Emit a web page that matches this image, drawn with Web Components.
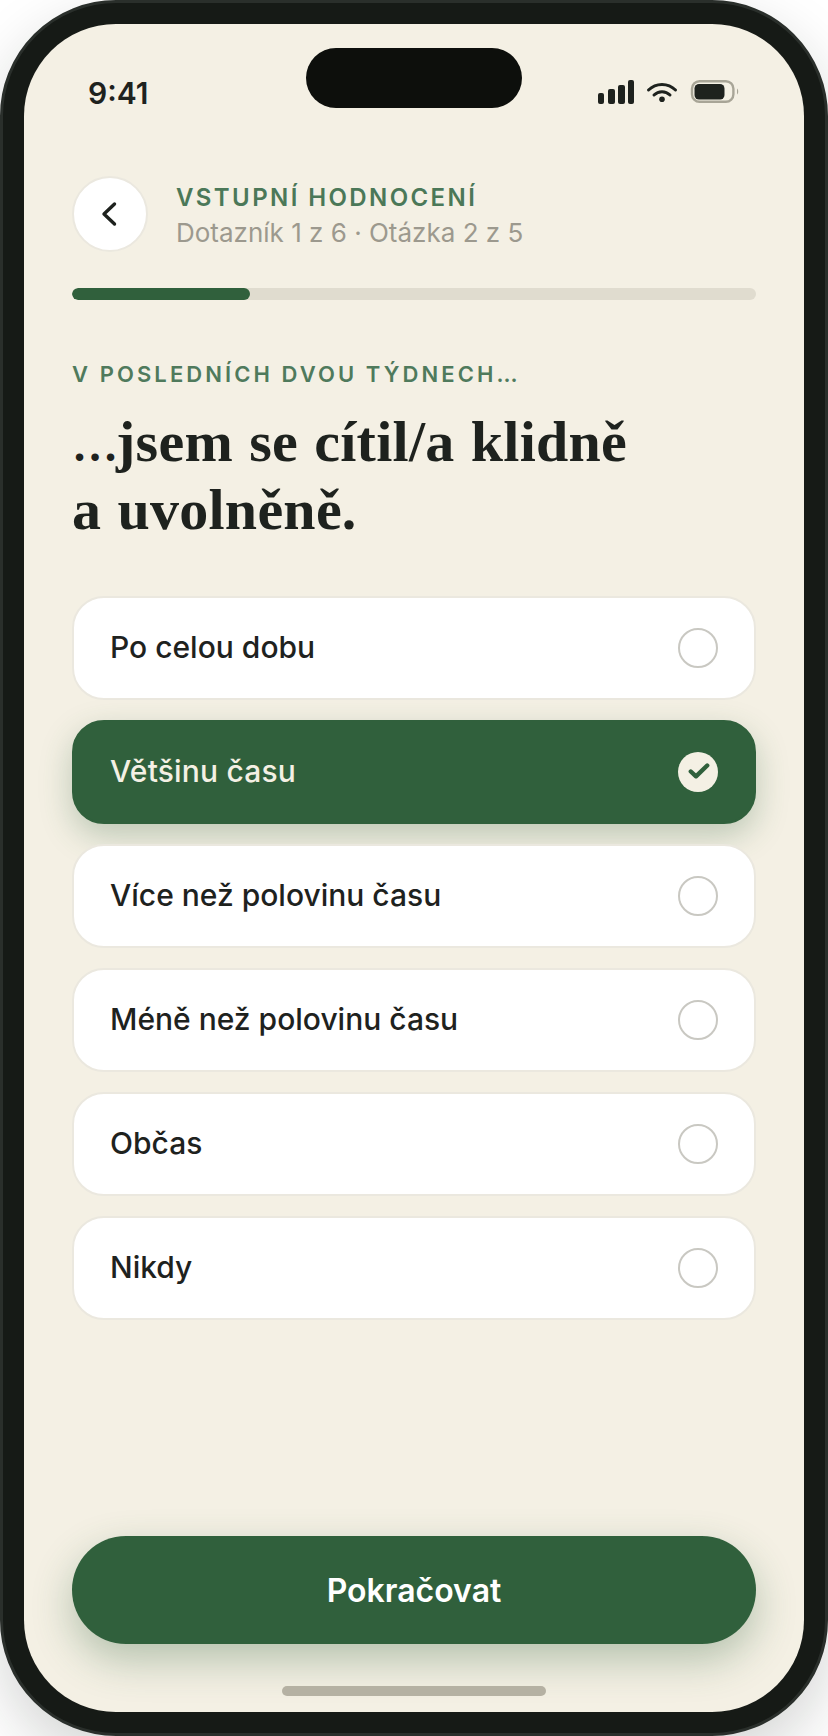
<!DOCTYPE html>
<html lang="cs"><head><meta charset="utf-8"><title>Vstupní hodnocení</title>
<style>
html,body{margin:0;padding:0;background:#fff;}
body{width:828px;height:1736px;overflow:hidden;font-family:Inter,"Liberation Sans",sans-serif;}
</style></head><body>
<phone-frame>
  <status-bar></status-bar>
  <quiz-header title-text="VSTUPNÍ HODNOCENÍ" sub-text="Dotazník 1 z 6 · Otázka 2 z 5"></quiz-header>
  <quiz-progress value="26"></quiz-progress>
  <quiz-question eyebrow="V POSLEDNÍCH DVOU TÝDNECH…"><span style="font-size:46px;letter-spacing:-2px;line-height:1">…</span>jsem se cítil/a klidně<br>a uvolněně.</quiz-question>
  <option-list>
    <option-row>Po celou dobu</option-row>
    <option-row selected>Většinu času</option-row>
    <option-row>Více než polovinu času</option-row>
    <option-row>Méně než polovinu času</option-row>
    <option-row>Občas</option-row>
    <option-row>Nikdy</option-row>
  </option-list>
  <primary-button>Pokračovat</primary-button>
  <home-indicator></home-indicator>
</phone-frame>
<script>
function def(name, html){
  customElements.define(name, class extends HTMLElement{
    constructor(){ super(); this.attachShadow({mode:'open'}); }
    connectedCallback(){ this.shadowRoot.innerHTML=typeof html==='function'?html(this):html; }
  });
}
def('phone-frame',`<style>
:host{display:block;box-sizing:border-box;width:828px;height:1736px;padding:21px;background:#161a16;border:3px solid #2a2f2b;border-radius:116px;box-shadow:0 24px 60px rgba(20,26,20,.18);}
.screen{position:relative;box-sizing:border-box;width:780px;height:1688px;background:#f4f0e4;border-radius:92px;overflow:hidden;display:flex;flex-direction:column;}
</style><div class="screen"><slot></slot></div>`);
def('status-bar',`<style>
:host{display:flex;flex:none;box-sizing:border-box;height:134px;padding:0 64px 0 64px;justify-content:space-between;align-items:flex-start;position:relative;}
.t{font:600 30px/1 Inter,sans-serif;color:#1e221e;margin-top:54px;}
.island{position:absolute;left:282px;top:24px;width:216px;height:60px;border-radius:30px;background:#0d0f0c;}
svg{display:block;margin-top:55px;}
</style><span class="t">9:41</span><div class="island"></div>
<svg width="142" height="26" viewBox="0 0 142 26" fill="none">
<g fill="#1e221e"><rect x="0" y="14" width="6" height="11" rx="2"/><rect x="10" y="10" width="7" height="15" rx="2"/><rect x="20" y="6" width="7" height="19" rx="2"/><rect x="30" y="1" width="6" height="24" rx="2"/></g>
<path d="M50.500 11C58 3.500 70 3.500 77.500 11" stroke="#1e221e" stroke-width="3" stroke-linecap="round"/>
<path d="M56 16C60.500 11.500 67.500 11.500 72 16" stroke="#1e221e" stroke-width="3" stroke-linecap="round"/>
<circle cx="64" cy="20.300" r="2.800" fill="#1e221e"/>
<rect x="94" y="2.200" width="41.400" height="20.600" rx="7.500" stroke="#a8a597" stroke-width="2.400"/>
<rect x="96.500" y="5" width="30" height="15.500" rx="4.500" fill="#1e221e"/>
<path d="M139 9.500c1.600.8 1.600 5.200 0 6z" fill="#a8a597"/>
</svg>`);
def('quiz-header',h=>`<style>
:host{display:flex;flex:none;align-items:center;gap:28px;padding:0 48px;height:76px;margin-top:18px;}
.b{box-sizing:border-box;width:76px;height:76px;border-radius:50%;background:#fff;border:2px solid #ebe8df;display:flex;align-items:center;justify-content:center;flex:none;}
.w{padding-top:2px;}
.a{font:600 24px/32px Inter,sans-serif;letter-spacing:.1em;color:#4b7858;}
.s{font:400 26px/32px Inter,sans-serif;color:#9c998e;margin-top:3px;}
</style><div class="b"><svg width="28" height="28" viewBox="0 0 28 28" fill="none"><path d="M18.500 4 8 14 18.500 24" stroke="#1e221e" stroke-width="3.400" stroke-linecap="round" stroke-linejoin="round"/></svg></div>
<div class="w"><div class="a">${h.getAttribute('title-text')}</div><div class="s">${h.getAttribute('sub-text')}</div></div>`);
def('quiz-progress',`<style>
:host{display:block;flex:none;height:12px;margin:36px 48px 0;background:#e0dccf;border-radius:6px;overflow:hidden;}
div{height:100%;width:26%;background:#30603c;border-radius:6px;}
</style><div></div>`);
def('quiz-question',h=>`<style>
:host{display:block;flex:none;margin:0 48px;padding-top:59px;}
.e{font:600 22px/30px Inter,sans-serif;letter-spacing:.14em;color:#4f7a5c;}
h1{margin:19px 0 0;font:700 58px/68px "Liberation Serif",serif;color:#1e221e;letter-spacing:.25px;word-spacing:1.500px;}
</style><div class="e">${h.getAttribute('eyebrow')}</div><h1><slot></slot></h1>`);
def('option-list',`<style>
:host{display:flex;flex:none;flex-direction:column;gap:20px;margin:52px 48px 0;}
</style><slot></slot>`);
def('option-row',h=>`<style>
:host{display:flex;box-sizing:border-box;height:104px;align-items:center;justify-content:space-between;padding:0 36px;background:#fff;border:2px solid #ebe8df;border-radius:32px;font:500 30px/1 Inter,sans-serif;color:#1e221e;}
:host([selected]){background:#30603c;border-color:#30603c;color:#f4f0e4;letter-spacing:.18px;box-shadow:0 12px 32px rgba(48,96,60,.28);}
.l{margin-bottom:2px;}
.c{box-sizing:border-box;width:40px;height:40px;border-radius:50%;border:2.500px solid #c9c8c2;display:flex;align-items:center;justify-content:center;flex:none;}
:host([selected]) .c{background:#f4f0e4;border:0;}
</style><span class="l"><slot></slot></span><span class="c">${h.hasAttribute('selected')?'<svg width="24" height="24" viewBox="0 0 24 24" fill="none"><path d="M4.800 11.500 10 16.300 21.200 5.500" stroke="#30603c" stroke-width="4.400" stroke-linecap="round" stroke-linejoin="round"/></svg>':''}</span>`);
def('primary-button',`<style>
:host{display:flex;flex:none;box-sizing:border-box;height:108px;margin:auto 48px 0;padding-top:2px;align-items:center;justify-content:center;border-radius:54px;background:#30603c;color:#fff;font:600 32px/1 Inter,sans-serif;box-shadow:0 16px 40px rgba(48,96,60,.32);}
</style><slot></slot>`);
def('home-indicator',`<style>
:host{display:block;flex:none;width:264px;height:10px;border-radius:5px;background:#b5b1a3;margin:42px auto 16px;}
</style>`);
</script>
</body></html>
